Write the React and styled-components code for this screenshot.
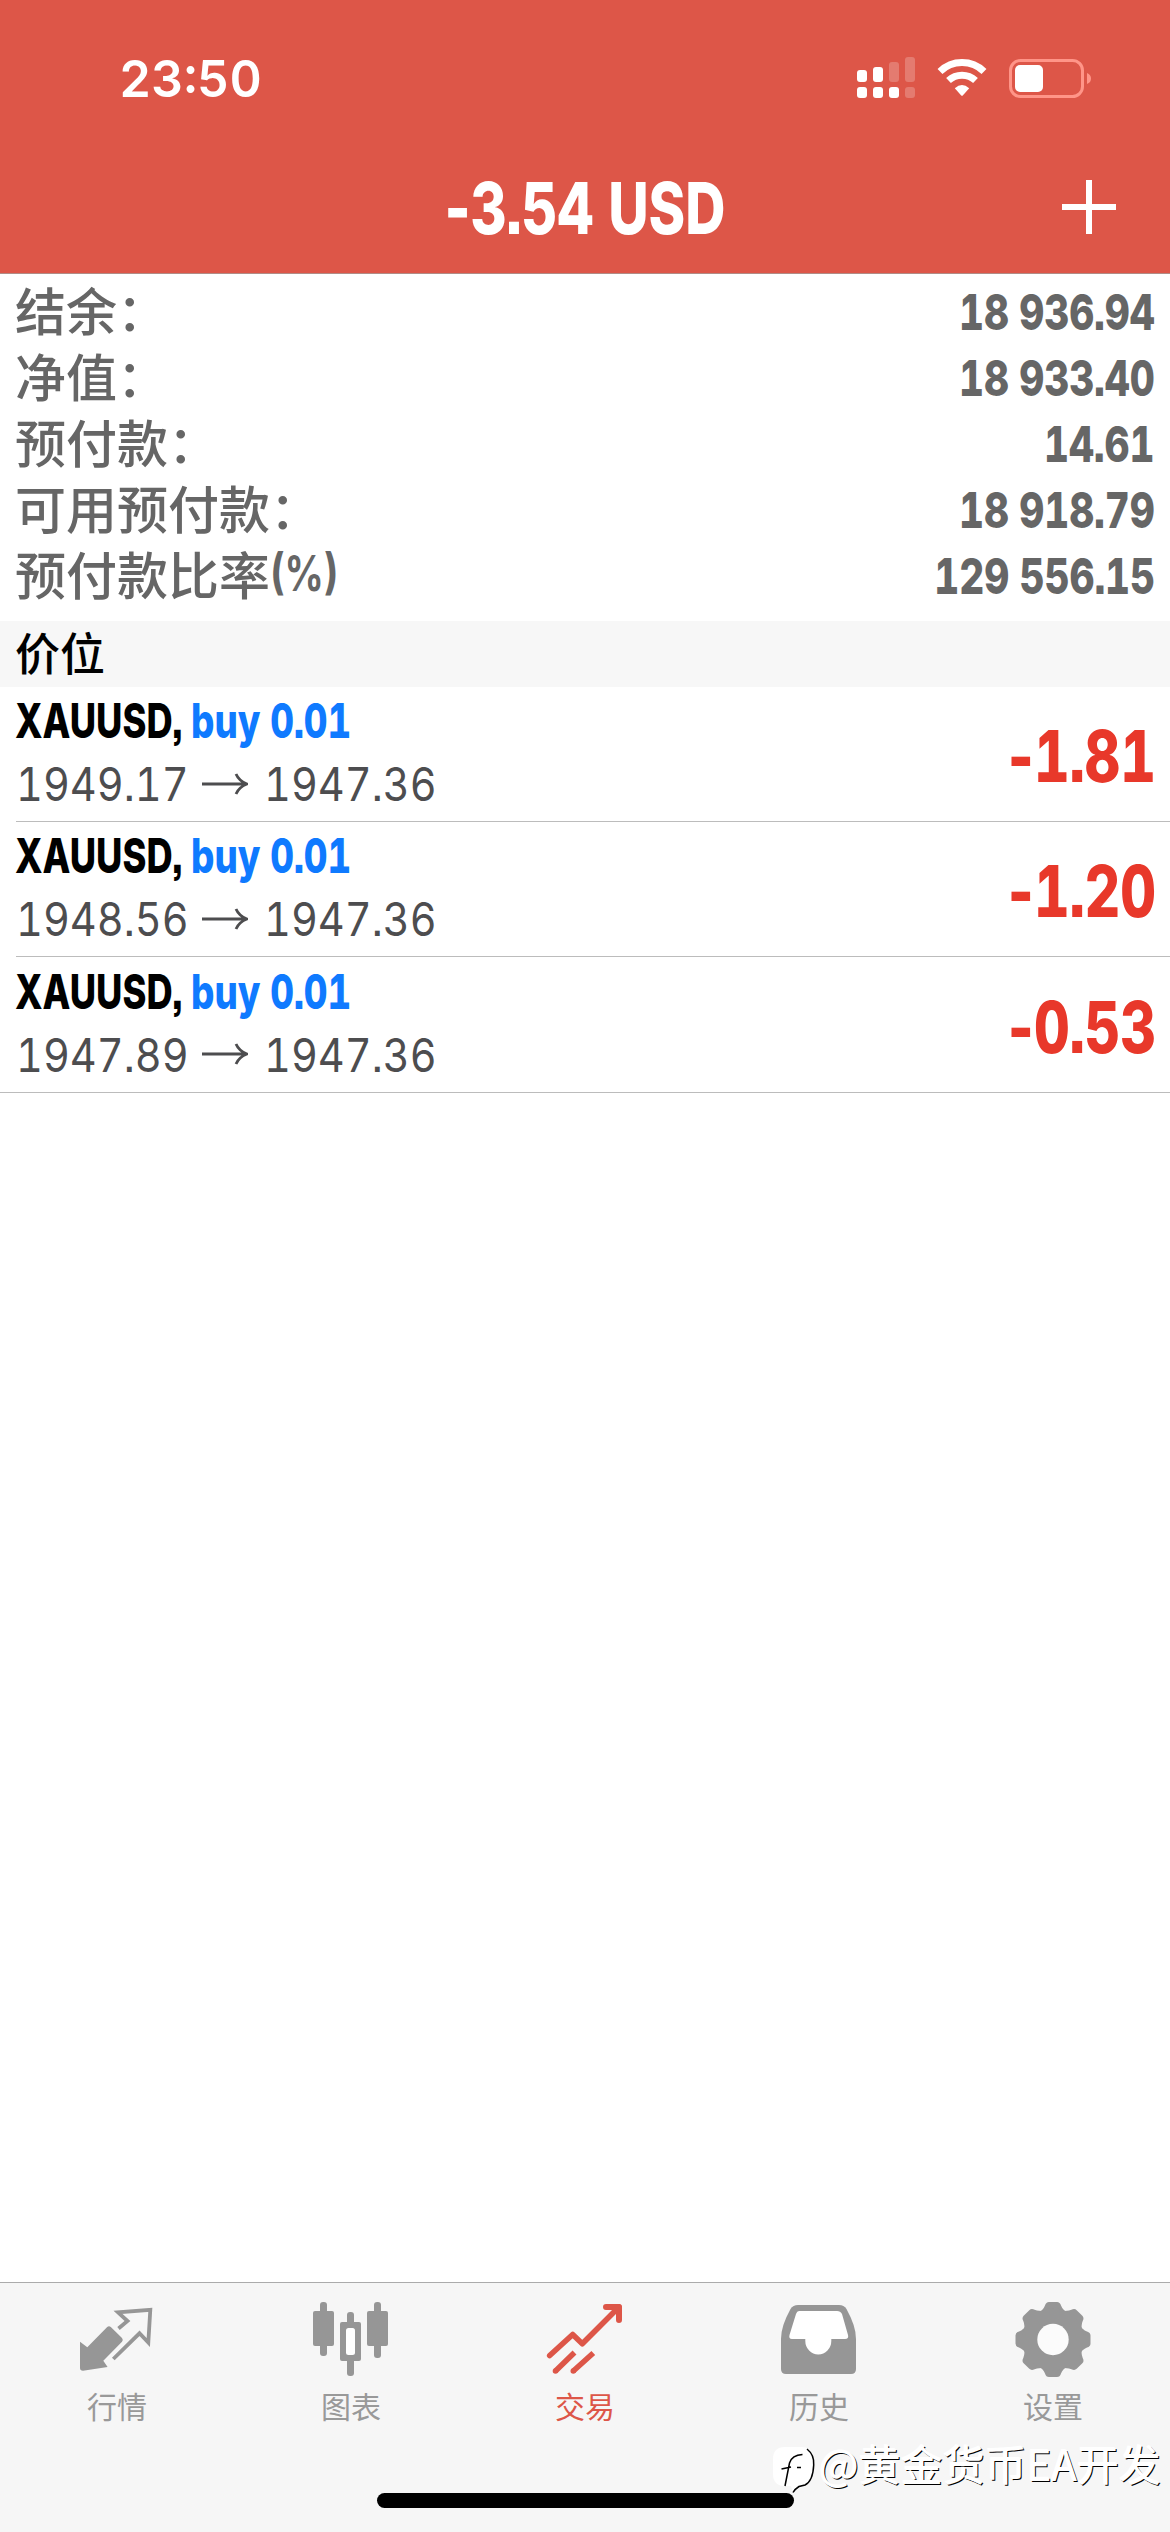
import styled, { createGlobalStyle } from "styled-components";

const summary = [
  { label: "结余：", value: "18 936.94" },
  { label: "净值：", value: "18 933.40" },
  { label: "预付款：", value: "14.61" },
  { label: "可用预付款：", value: "18 918.79" },
  { label: "预付款比率", unit: "(%)", value: "129 556.15" },
];

const positions = [
  { id: 1, open: "1949.17", current: "1947.36", profit: "1.81" },
  { id: 2, open: "1948.56", current: "1947.36", profit: "1.20" },
  { id: 3, open: "1947.89", current: "1947.36", profit: "0.53" },
];

const SignalIcon = () => (
  <svg width="58" height="42" viewBox="0 0 58 42" fill="#fff">
    <rect x="0" y="13" width="10" height="12" rx="3" />
    <rect x="16" y="10" width="10" height="15" rx="3" />
    <rect x="32" y="5" width="10" height="20" rx="3" opacity="0.22" />
    <rect x="48" y="0" width="10" height="25" rx="3" opacity="0.22" />
    <rect x="0" y="30" width="10" height="11" rx="3" />
    <rect x="16" y="30" width="10" height="11" rx="3" />
    <rect x="32" y="30" width="10" height="11" rx="3" />
    <rect x="48" y="30" width="10" height="11" rx="3" opacity="0.22" />
  </svg>
);

const WifiIcon = () => (
  <svg width="50" height="38" viewBox="0 0 50 38">
    <path d="M3 12.5A31.5 31.5 0 0 1 47 12.5" stroke="#fff" strokeWidth="7" fill="none" />
    <path d="M11.5 21.5A20 20 0 0 1 38.5 21.5" stroke="#fff" strokeWidth="7" fill="none" />
    <path d="M17.8 29.2Q25 23 32.2 29.2L26 36.3Q25 37.3 24 36.3Z" fill="#fff" />
  </svg>
);

const BatteryIcon = () => (
  <svg width="83" height="39" viewBox="0 0 83 39">
    <rect x="1.5" y="1.5" width="72" height="36" rx="10" fill="none" stroke="#ff9588" strokeWidth="3" />
    <rect x="6" y="6" width="28" height="27" rx="5" fill="#fff" />
    <path d="M78 14Q82 15.5 82 19.5T78 25Z" fill="#ff9588" />
  </svg>
);

const PlusIcon = () => (
  <svg width="54" height="54" viewBox="0 0 54 54">
    <path d="M27 0V54M0 27H54" stroke="#fff" strokeWidth="6" />
  </svg>
);

const ArrowIcon = () => (
  <svg width="46" height="24" viewBox="0 0 46 24" fill="none" stroke="#4d4d4f" strokeWidth="2.8">
    <path d="M0 12H44M34 2Q37 9 45 12Q37 15 34 22" />
  </svg>
);

const QuotesIcon = () => (
  <svg width="80" height="80" viewBox="0 0 80 80">
    <path
      d="M3 41.7L10.3 47.3L30.2 27Q32 25.3 33.8 27L45 38Q46.6 40 45 41.8L26.3 60.7L30.6 67L6 70.7Q3 70.7 3 68Z"
      fill="#969696"
    />
    <path
      d="M41.5 28.5L50.5 21L41 12.3L73.3 9.8L71.3 42.5L62.5 33.3L36.3 59"
      fill="none"
      stroke="#969696"
      strokeWidth="3.8"
    />
  </svg>
);

const ChartIcon = () => (
  <svg width="80" height="80" viewBox="0 0 80 80" fill="#969696">
    <rect x="9" y="2" width="7" height="54" rx="3" />
    <rect x="2" y="11" width="21" height="35" rx="2" />
    <rect x="36" y="12" width="7" height="64" rx="3" />
    <rect x="29" y="22" width="21" height="39" rx="2" />
    <rect x="35" y="28" width="9" height="27" rx="2.5" fill="#fff" />
    <rect x="63" y="2" width="7" height="56" rx="3" />
    <rect x="56" y="11" width="21" height="35" rx="2" />
  </svg>
);

const TradeIcon = () => (
  <svg width="80" height="80" viewBox="0 0 80 80" fill="none" stroke="#dd5648" strokeWidth="5.6">
    <path d="M4.7 55.5L27.7 34.5L37.3 43.7L74 7" strokeLinecap="round" strokeLinejoin="round" />
    <path d="M61 7H74V20" strokeWidth="6" strokeLinecap="round" strokeLinejoin="round" />
    <path d="M10.5 71L29.5 52.5M28.3 71L48.3 53" />
    <circle cx="10.5" cy="71" r="2.8" fill="#dd5648" stroke="none" />
    <circle cx="28.3" cy="71" r="2.8" fill="#dd5648" stroke="none" />
  </svg>
);

const HistoryIcon = () => (
  <svg width="80" height="80" viewBox="0 0 80 80">
    <path
      d="M19 5H60Q65 5 67.5 9Q77 26 77 39V69Q77 74 72 74H7Q2 74 2 69V39Q2 26 11.5 9Q14 5 19 5Z"
      fill="#969696"
    />
    <path
      d="M20 11H58Q61.5 11 63 14L69 35Q70 39 66 39H52.3V41A13 13.5 0 0 1 26.3 41V39H13Q9.5 39 10.5 35L17 14Q18 11 20 11Z"
      fill="#fff"
    />
  </svg>
);

const SettingsIcon = () => (
  <svg width="80" height="80" viewBox="-40 -39.5 80 80">
    {[0, 45, 90, 135, 180, 225, 270, 315].map((angle) => (
      <path
        key={angle}
        transform={`rotate(${angle})`}
        d="M-14 -26L-10.5 -30Q-9 -31.5 -8 -34Q-7 -37.5 -4 -37.5H4Q7 -37.5 8 -34Q9 -31.5 10.5 -30L14 -26Z"
        fill="#969696"
      />
    ))}
    <circle r="31" fill="#969696" />
    <circle r="15.7" fill="#fbfbfb" />
  </svg>
);

const tabs = [
  { label: "行情", icon: <QuotesIcon /> },
  { label: "图表", icon: <ChartIcon /> },
  { label: "交易", icon: <TradeIcon />, active: true },
  { label: "历史", icon: <HistoryIcon /> },
  { label: "设置", icon: <SettingsIcon /> },
];

const App = () => {
  return (
    <Main>
      <GlobalStyle />
      <Header>
        <StatusBar>
          <Time>23:50</Time>
          <StatusIcons>
            <SignalIcon />
            <WifiIcon />
            <BatteryIcon />
          </StatusIcons>
        </StatusBar>
        <TitleBar>
          <div />
          <Title>
            <Minus>-</Minus>3.54 USD
          </Title>
          <AddButton>
            <PlusIcon />
          </AddButton>
        </TitleBar>
      </Header>
      <Summary>
        {summary.map((item) => (
          <SummaryRow key={item.label}>
            <Label>
              {item.label}
              {item.unit && <Unit>{item.unit}</Unit>}
            </Label>
            <Value>{item.value}</Value>
          </SummaryRow>
        ))}
      </Summary>
      <SectionTitle>价位</SectionTitle>
      <PositionList>
        {positions.map((position) => (
          <Position key={position.id}>
            <PositionInfo>
              <SymbolLine>
                <SymbolName>XAUUSD,</SymbolName>
                <Side>buy 0.01</Side>
              </SymbolLine>
              <PriceLine>
                <Price>{position.open}</Price>
                <ArrowIcon />
                <Price>{position.current}</Price>
              </PriceLine>
            </PositionInfo>
            <Profit>
              <Minus>-</Minus>
              {position.profit}
            </Profit>
          </Position>
        ))}
      </PositionList>
      <TabBar>
        {tabs.map((tab) => (
          <Tab key={tab.label} $active={tab.active}>
            {tab.icon}
            <span>{tab.label}</span>
          </Tab>
        ))}
        <HomeIndicator />
        <Watermark>
          <svg width="48" height="52" viewBox="0 0 48 52" fill="none" stroke="#000" strokeWidth="1.5">
            <path
              d="M14 2H30Q42 2 42 14V26Q42 41 30 41L22 48L20 41H14Q2 41 2 29V14Q2 2 14 2Z"
              fill="#fff"
              stroke="none"
            />
            <path d="M36 4Q43.5 10 42.7 20Q42 36 34 40L28 41.5Q24 44 22 47.5" />
            <path d="M14 41L18.5 18Q21 10 31.5 9.5M10.5 24L20 22M26 22.5H30" />
          </svg>
          <span>@黄金货币EA开发</span>
        </Watermark>
      </TabBar>
    </Main>
  );
};

export default App;

const GlobalStyle = createGlobalStyle`
  body {
    margin: 0;
    background: #fff;
  }

  svg {
    display: block;
    flex-shrink: 0;
  }
`;

const Main = styled.div`
  display: flex;
  flex-direction: column;
  width: 1170px;
  height: 2532px;
  overflow: hidden;
  background: #fff;
  font-family: Inter, "Noto Sans CJK SC", sans-serif;
`;

const Header = styled.div`
  box-sizing: border-box;
  height: 274px;
  background: #dd5648;
  border-bottom: 1px solid #b08c86;
`;

const StatusBar = styled.div`
  display: flex;
  justify-content: space-between;
  box-sizing: border-box;
  height: 141px;
  padding: 57px 78px 0 119px;
`;

const Time = styled.div`
  color: #fff;
  font-size: 51px;
  font-weight: 600;
  line-height: 43px;
  font-feature-settings: "tnum";
  transform: scaleX(0.98);
  transform-origin: left;
`;

const StatusIcons = styled.div`
  display: flex;
  align-items: center;
  gap: 22px;
  height: 42px;
`;

const TitleBar = styled.div`
  display: grid;
  grid-template-columns: 1fr auto 1fr;
  align-items: center;
  height: 132px;
`;

// Condensed bold numerals, squeezed horizontally
const Narrow = styled.div`
  font-weight: 800;
  white-space: nowrap;
  font-feature-settings: "tnum", "ss07";
`;

// The tabular hyphen is as wide as a digit, so the sign is proportional
const Minus = styled.span`
  font-feature-settings: normal;
`;

const Title = styled(Narrow)`
  color: #fff;
  font-size: 72px;
  transform: scaleX(0.772);
`;

const AddButton = styled.div`
  justify-self: end;
  padding-right: 54px;
`;

const Summary = styled.div`
  box-sizing: border-box;
  height: 347px;
  padding: 5px 15px 0;
`;

const SummaryRow = styled.div`
  display: flex;
  align-items: center;
  justify-content: space-between;
  height: 66px;
  color: #666;
`;

const Label = styled.div`
  display: flex;
  padding-bottom: 5px;
  font-family: "Noto Sans CJK SC", sans-serif;
  font-size: 51px;
  font-weight: 500;
  line-height: 61px;
`;

const Unit = styled.span`
  font-family: Inter, sans-serif;
  font-size: 49px;
  font-weight: 700;
  line-height: 61px;
  transform: scaleX(0.79);
  transform-origin: left;
`;

const Value = styled(Narrow)`
  font-size: 50px;
  transform: scaleX(0.775);
  transform-origin: right;
`;

const SectionTitle = styled.div`
  height: 66px;
  padding: 0 15px;
  background: #f7f7f7;
  color: #000;
  font-family: "Noto Sans CJK SC", sans-serif;
  font-size: 45px;
  font-weight: 500;
  line-height: 62px;
`;

const PositionList = styled.div`
  flex: 1;
`;

const Position = styled.div`
  display: flex;
  align-items: center;
  justify-content: space-between;
  box-sizing: border-box;
  height: 135px;
  margin-left: 16px;
  padding-right: 14px;
  border-bottom: 1px solid #bcbcbc;

  &:last-child {
    height: 136px;
    margin-left: 0;
    padding-left: 16px;
  }
`;

const PositionInfo = styled.div`
  padding-bottom: 4px;
`;

const SymbolLine = styled.div`
  display: grid;
  grid-template-columns: 175px auto;
  height: 63px;
  line-height: 63px;
  font-size: 48px;
`;

const SymbolName = styled(Narrow)`
  margin-left: -1px;
  color: #000;
  transform: scaleX(0.755);
  transform-origin: left;
`;

const Side = styled(Narrow)`
  color: #0f7aff;
  transform: scaleX(0.765);
  transform-origin: left;
`;

const PriceLine = styled.div`
  display: grid;
  grid-template-columns: 186px 62px auto;
  align-items: center;
  height: 63px;
`;

const Price = styled.div`
  color: #4d4d4f;
  font-size: 47px;
  font-feature-settings: "tnum", "ss07";
  transform: scaleX(0.883);
  transform-origin: left;
`;

const Profit = styled(Narrow)`
  padding-top: 4px;
  color: #e8382a;
  font-size: 71px;
  transform: scaleX(0.78);
  transform-origin: right;
`;

const TabBar = styled.div`
  position: relative;
  display: grid;
  grid-template-columns: repeat(5, 1fr);
  box-sizing: border-box;
  height: 250px;
  padding-top: 17px;
  background: #f6f6f6;
  border-top: 1px solid #ababab;
`;

const Tab = styled.div`
  display: flex;
  flex-direction: column;
  align-items: center;
  color: ${(props) => (props.$active ? "#dd5648" : "#999")};
  font-family: "Noto Sans CJK SC", sans-serif;
  font-size: 30px;
  line-height: 51px;
`;

const HomeIndicator = styled.div`
  position: absolute;
  left: 377px;
  bottom: 24px;
  width: 417px;
  height: 15px;
  border-radius: 8px;
  background: #000;
`;

const Watermark = styled.div`
  position: absolute;
  right: 9px;
  bottom: 35px;
  display: flex;
  align-items: flex-start;
  color: #fff;
  font-family: "Noto Sans CJK SC", sans-serif;
  font-size: 42px;
  font-weight: 400;
  line-height: 36px;
  white-space: nowrap;
  text-shadow: -1px -1px 0 #fff, 1px 1px 0 #000;
`;
